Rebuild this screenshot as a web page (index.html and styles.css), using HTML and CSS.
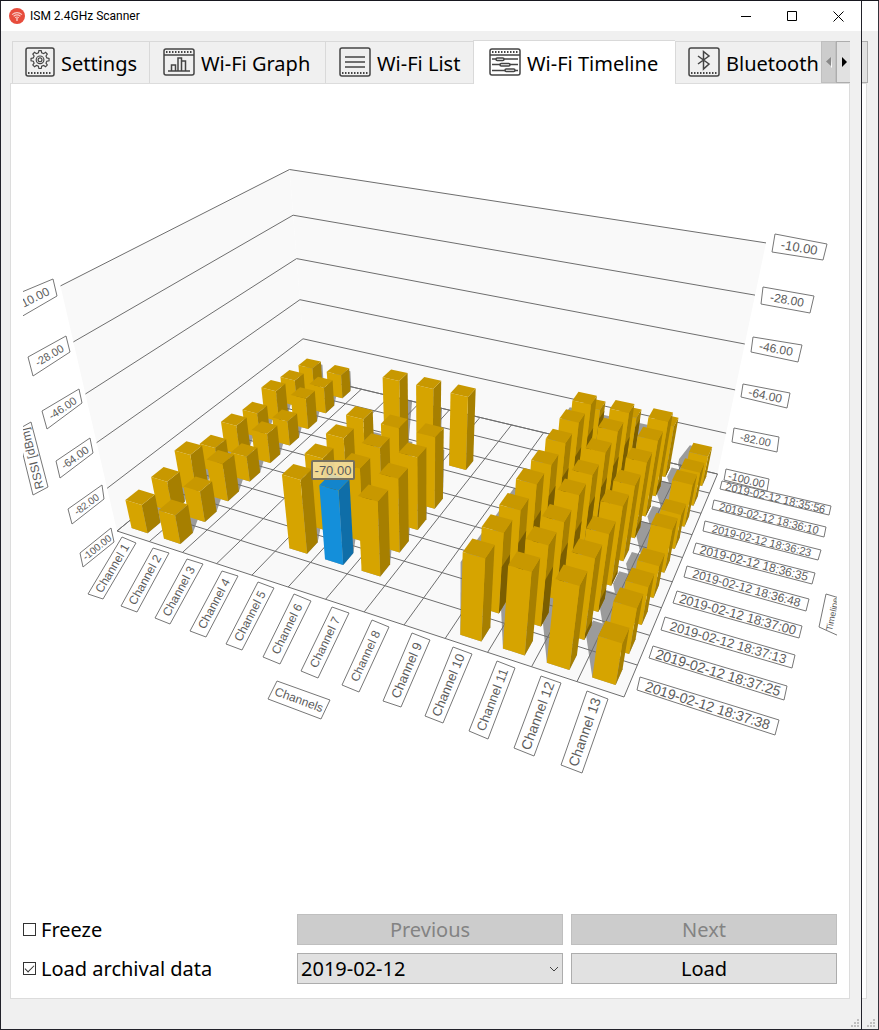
FILE: index.html
```html
<!DOCTYPE html>
<html lang="en">
<head>
<meta charset="utf-8">
<title>ISM 2.4GHz Scanner</title>
<link rel="stylesheet" href="styles.css">
</head>
<body>
<div class="desktop">
  <main class="window">
    <header class="titlebar">
      <svg class="app-icon" viewBox="0 0 16 16" aria-hidden="true"><circle cx="8" cy="8" r="8" fill="#e74c3c"/><g fill="none" stroke="#f9c9c3" stroke-width="1.1"><path d="M3 6.6q5-4 10 0M4.6 8.2q3.4-2.6 6.8 0M6.2 9.7q1.8-1.3 3.6 0"/></g><path d="M7.3 10h1.4v3H7.3z" fill="#f9c9c3"/></svg>
      <h1 class="title">ISM 2.4GHz Scanner</h1>
      <button class="caption" aria-label="Minimize"><svg viewBox="0 0 11 11"><path d="M0 5.5h10"/></svg></button>
      <button class="caption" aria-label="Maximize"><svg viewBox="0 0 11 11"><path d="M.5.5h9v9h-9z"/></svg></button>
      <button class="caption" aria-label="Close"><svg viewBox="0 0 11 11"><path d="M.5.5l10 10M10.5.5l-10 10"/></svg></button>
    </header>
    <div class="body">
      <nav class="tabs" role="tablist">
        <button class="tab settings" role="tab"><svg class="icon icon-small" viewBox="0 0 30 30"><rect x="1" y="1" width="28" height="28" rx="2"/><g transform="translate(3.5 2.8) scale(.77)"><circle cx="15" cy="13" r="2.5"/><circle cx="15" cy="13" r="5"/><path d="M13.5 1h3l.6 2.900 2.600 1.100 2.500-1.700 2.200 2.200-1.700 2.500 1.100 2.500 2.900.6v3.100l-2.900.6-1.100 2.500 1.700 2.500-2.200 2.200-2.500-1.700-2.600 1.100-.6 2.900h-3l-.6-2.900-2.600-1.100-2.500 1.700-2.200-2.200 1.700-2.500-1.100-2.500-2.900-.6v-3.100l2.900-.6 1.100-2.500-1.700-2.500 2.200-2.200 2.500 1.700 2.600-1.100z"/></g><path class="dots" d="M3 26h24"/></svg>Settings</button>
        <button class="tab graph" role="tab"><svg class="icon" viewBox="0 0 32 30"><rect x="1" y="2" width="30" height="26" rx="2"/><path d="M1 8h30M5 24h22M8.500 24v-6h4v6M15 24V11h3.500v13M18.500 14h4v10"/><path class="dots" d="M3 5h26"/></svg>Wi-Fi Graph</button>
        <button class="tab list" role="tab"><svg class="icon" viewBox="0 0 32 30"><rect x="1" y="1" width="30" height="28" rx="2"/><path d="M6 10h20M6 15h20M6 20h20"/><path class="dots" d="M3 26h26"/></svg>Wi-Fi List</button>
        <button class="tab timeline selected" role="tab" aria-selected="true"><svg class="icon" viewBox="0 0 32 30"><rect x="1" y="2" width="30" height="26" rx="2"/><path d="M1 8h30M3 12h4M15 12h14M3 17.500h8M21 17.500h8M3 23.500h13M26 23.500h3"/><rect x="7" y="11" width="8" height="2.500" rx="1.200"/><rect x="11" y="16.500" width="10" height="2.500" rx="1.200"/><rect x="16" y="22" width="10" height="2.500" rx="1.200"/><path class="dots" d="M3 5h26"/></svg>Wi-Fi Timeline</button>
        <button class="tab last" role="tab"><svg class="icon" viewBox="0 0 32 30"><rect x="1" y="1" width="30" height="28" rx="2"/><path d="M10 9l11 8-5.500 5V4.500L21 9l-11 8"/><path class="dots" d="M3 26h26"/></svg>Bluetooth</button>
        <div class="scrollers">
          <button class="scroll" disabled aria-label="Scroll tabs left"><svg viewBox="0 0 8 12"><path d="M7 1v11l-1-1z" fill="#fff"/><path d="M6 1v9L1 5.500z" fill="#888"/></svg></button>
          <button class="scroll" aria-label="Scroll tabs right"><svg viewBox="0 0 8 12"><path d="M2 1v10l5-5z"/></svg></button>
        </div>
      </nav>
      <section class="panel">
        <svg class="chart" id="chart" viewBox="23 96 814 810" role="img" aria-label="RSSI by channel over time"></svg>
        <form class="controls">
          <label class="check"><input type="checkbox"><span>Freeze</span></label>
          <button class="button" type="button" disabled>Previous</button>
          <button class="button" type="button" disabled>Next</button>
          <label class="check"><input type="checkbox" checked><span>Load archival data</span></label>
          <div class="combo"><select aria-label="Date"><option>2019-02-12</option></select><svg viewBox="0 0 10 6"><path d="M1 1l4 4 4-4"/></svg></div>
          <button class="button" type="button">Load</button>
        </form>
      </section>
      <footer class="status"><svg class="grip" viewBox="0 0 8 8"><path d="M6 0h2v2H6zM3 3h2v2H3zM6 3h2v2H6zM0 6h2v2H0zM3 6h2v2H3zM6 6h2v2H6z"/></svg></footer>
    </div>
  </main>
  <aside class="behind" aria-hidden="true">
    <div class="behind-title"></div>
    <div class="behind-scroll"></div>
    <div class="behind-panel"></div>
    <div class="behind-status"><svg class="grip" viewBox="0 0 8 8"><path d="M6 0h2v2H6zM3 3h2v2H3zM6 3h2v2H6zM0 6h2v2H0zM3 6h2v2H3zM6 6h2v2H6z"/></svg></div>
  </aside>
</div>
<script src="chart.js"></script>
</body>
</html>
```
FILE: styles.css
```css
* { box-sizing: border-box; }
body { margin: 0; background: #17171f; color: #000; font-family: "Noto Sans", "Open Sans", sans-serif; font-size: 20px; line-height: 28px; }
button, select, input { font: inherit; color: inherit; margin: 0; }
.desktop { display: flex; height: 100vh; min-height: 600px; padding-top: 1px; }
.window { flex: 1; min-width: 0; display: flex; flex-direction: column; border: 1px solid #22222a; border-top: 0; background: #f0f0f0; }
.titlebar { display: flex; align-items: center; height: 30px; padding-left: 8px; background: #fff; }
.app-icon { width: 16px; height: 16px; margin-right: 5px; }
.title { flex: 1; margin: 0; font-size: 12px; line-height: 16px; font-weight: 400; font-family: Roboto, "Noto Sans", sans-serif; }
.caption { width: 46px; height: 30px; padding: 0; border: 0; background: none; display: grid; place-items: center; }
.caption svg { width: 11px; height: 11px; fill: none; stroke: #000; }
.body { flex: 1; min-height: 0; display: flex; flex-direction: column; padding: 9px 11px 0 9px; }
.tabs { position: relative; z-index: 1; display: flex; align-items: flex-end; height: 44px; padding-left: 2px; overflow: hidden; flex: none; }
.tab { display: flex; align-items: center; gap: 6px; height: 42px; margin-bottom: 1px; padding: 3px 0 0 13px; border: 1px solid #d9d9d9; border-right: 0; border-bottom: 0; background: #f0f0f0; white-space: nowrap; flex: none; }
.tab.settings { width: 137px; padding-left: 12px; }
.tab.graph { width: 176px; }
.tab.list { width: 148px; }
.tab.timeline { width: 202px; }
.tab.selected { height: 44px; margin-bottom: 0; padding-left: 15px; background: #fff; }
.tab.last { flex: 1 0 auto; padding-left: 12px; border-left: 1px solid #d9d9d9; }
.icon { width: 32px; height: 30px; fill: none; stroke: #444; stroke-width: 1.500; margin-bottom: 5px; }
.icon-small { width: 30px; }
.icon .dots { stroke-dasharray: 1.500 1.500; stroke-width: 2; }
.scrollers { position: absolute; top: 1px; right: -1px; display: flex; }
.scroll { width: 15px; height: 42px; padding: 0; border: 1px solid #adadad; background: #e1e1e1; display: grid; place-items: center; }
.scroll:disabled { background: #ccc; border-color: #bfbfbf; }
.scroll svg { width: 8px; height: 12px; }
.panel { flex: 1; min-height: 0; display: flex; flex-direction: column; gap: 8px; padding: 12px 12px 14px; margin-top: -1px; border: 1px solid #dcdcdc; background: #fff; }
.chart { flex: 1; min-height: 0; width: 100%; font-family: "Liberation Sans", Arial, sans-serif; }
.controls { display: grid; grid-template-columns: repeat(3, 1fr); gap: 8px; }
.check { display: flex; align-items: center; gap: 5px; }
.check input { appearance: none; width: 13px; height: 13px; border: 1px solid #333; background: #fff; display: grid; place-items: center; }
.check input:checked::before { content: ""; width: 8px; height: 4px; border: solid #333; border-width: 0 0 1px 1px; transform: rotate(-45deg); margin-bottom: 3px; }
.button { height: 31px; padding: 0; border: 1px solid #adadad; background: #e1e1e1; line-height: 28px; }
.button:disabled { color: #838383; background: #ccc; border-color: #bfbfbf; }
.combo { position: relative; height: 31px; }
.combo select { width: 100%; height: 31px; padding: 0 3px; border: 1px solid #adadad; border-radius: 0; background: #e1e1e1; appearance: none; line-height: 28px; }
.combo svg { position: absolute; right: 4px; top: 13px; width: 10px; height: 6px; fill: none; stroke: #444; pointer-events: none; }
.status { height: 30px; flex: none; display: flex; justify-content: flex-end; align-items: flex-end; margin-right: -9px; padding-bottom: 2px; }
.grip { width: 8px; height: 8px; fill: #bfbfbf; }
.behind { width: 17px; display: flex; flex-direction: column; border-right: 1px solid #33333b; border-bottom: 1px solid #33333b; background: #f0f0f0; }
.behind-title { height: 30px; background: #fff; }
.behind-scroll { width: 6px; height: 42px; margin-top: 10px; border: 1px solid #adadad; border-left: 0; background: #e1e1e1; }
.behind-panel { flex: 1; width: 5px; border: 1px solid #dcdcdc; border-left: 0; background: #fff; }
.behind-status { height: 30px; display: flex; align-items: flex-end; justify-content: flex-end; padding: 0 3px 2px 0; }

.wall { fill: #f9f9f9; }
.line { fill: none; stroke: #6e6e6e; }
.shadow { fill: #9b9b9b; }
.tag { fill: #fff; stroke: #777; stroke-linejoin: round; }
.tag-text { fill: #5c5c5c; text-anchor: middle; dominant-baseline: central; }
.bar-front { fill: #d6a400; }
.bar-side { fill: #a67f00; }
.bar-top { fill: #c89800; }
.bar-shade { fill: #7b5e00; }
.picked .bar-front { fill: #148fda; }
.picked .bar-side { fill: #0f6ea8; }
.picked .bar-top { fill: #1385cc; }
.tip { fill: #f5e0a6; fill-opacity: 0.88; stroke: #77715f; stroke-width: 2; }
```
FILE: chart.js
```js
const NS = 'http://www.w3.org/2000/svg';
const svg = document.getElementById('chart');
const CHANNELS = 13, ROWS = 9;

function add(parent, name, attrs, text) {
  const el = document.createElementNS(NS, name);
  for (const k in attrs) el.setAttribute(k, attrs[k]);
  if (text) el.textContent = text;
  parent.appendChild(el);
  return el;
}

// Camera: u runs along the channels, v along time, h is the share of full height.
function project(u, v, h) {
  const w = 1 - 0.18452 * u + 0.274 * v - 0.155 * h;
  return [(117 + 391.86 * u + 272.84 * v - 65.9 * h) / w,
          (531 + 37.39 * u - 51.98 * v - 289.4 * h) / w];
}
const pts = list => list.map(p => p[0].toFixed(1) + ',' + p[1].toFixed(1)).join(' ');
const face = (parent, cls, list) => add(parent, 'polygon', { class: cls, points: pts(list.map(p => project(...p))) });
const line = list => add(svg, 'polyline', { class: 'line', points: pts(list.map(p => project(...p))) });

// Walls and floor
face(svg, 'wall', [[0, 0, 1], [0, 1, 1], [0, 1, 0], [0, 0, 0]]);
face(svg, 'wall', [[0, 1, 1], [1, 1, 1], [1, 1, 0], [0, 1, 0]]);
face(svg, 'wall', [[0, 0, 0], [0, 1, 0], [1, 1, 0], [1, 0, 0]]);

// RSSI per channel, nearest row first; null where nothing was heard
const low = [-88, -87, -84, -89, -87, -89, -86, -88, -89];
const mid = [null, -70, -70, -70, -70, null, -68.5, null, null];
const high = [-68, -68.5, -69.5, -68.5, -69.5, -69, -68.5, -68.5, -78];
const data = {
  1: low, 2: low, 5: mid, 6: mid, 7: mid, 10: high, 11: high, 12: high,
  13: [-83.7, -82, -84.8, -87, -82.4, -85.7, -82.3, -85.7, -87]
};
const height = (c, r) => data[c] && data[c][r] != null ? (data[c][r] + 100) / 90 : 0;

function hull(points) {
  const p = points.slice().sort((a, b) => a[0] - b[0] || a[1] - b[1]);
  const cross = (o, a, b) => (a[0] - o[0]) * (b[1] - o[1]) - (a[1] - o[1]) * (b[0] - o[0]);
  const half = list => {
    const out = [];
    for (const q of list) {
      while (out.length > 1 && cross(out[out.length - 2], out[out.length - 1], q) <= 0) out.pop();
      out.push(q);
    }
    out.pop();
    return out;
  };
  return half(p).concat(half(p.reverse()));
}

// Shadows fall back and to the left, and climb the back wall
const LU = -0.22, LV = 0.72;
for (let c = 1; c <= CHANNELS; c++) {
  for (let r = 0; r < ROWS; r++) {
    const h = height(c, r);
    if (!h) continue;
    const floor = [], wall = [];
    for (const a of [0.75, 0.25]) for (const b of [0.25, 0.75]) {
      const u = (c - a) / CHANNELS, v = (r + b) / ROWS;
      const reach = Math.min(h, (1 - v) / LV);
      floor.push(project(u, v, 0), project(u + LU * reach, v + LV * reach, 0));
      if (reach < h) wall.push(project(u + LU * reach, 1, 0), project(u + LU * reach, 1, h - reach));
    }
    add(svg, 'polygon', { class: 'shadow', points: pts(hull(floor)) });
    if (wall.length > 2) add(svg, 'polygon', { class: 'shadow', points: pts(hull(wall)) });
  }
}

for (let i = 0; i <= 5; i++) line([[0, 0, i / 5], [0, 1, i / 5], [1, 1, i / 5]]);
for (let c = 0; c <= CHANNELS; c++) line([[c / CHANNELS, 0, 0], [c / CHANNELS, 1, 0]]);
for (let r = 0; r <= ROWS; r++) line([[0, r / ROWS, 0], [1, r / ROWS, 0]]);

// Bars, far to near
for (let r = ROWS - 1; r >= 0; r--) {
  for (let c = 1; c <= CHANNELS; c++) {
    const h = height(c, r);
    if (!h) continue;
    const g = add(svg, 'g', c === 6 && r === 1 ? { class: 'picked' } : {});
    const u0 = (c - 0.75) / CHANNELS, u1 = (c - 0.25) / CHANNELS;
    const v0 = (r + 0.25) / ROWS, v1 = (r + 0.75) / ROWS;
    face(g, 'bar-side', [[u1, v0, 0], [u1, v1, 0], [u1, v1, h], [u1, v0, h]]);
    const s = Math.min(h, height(c + 1, r - 1) - 0.15);
    if (r > 0 && s > 0) face(g, 'bar-shade', [[u1, v0, 0], [u1, v1, 0], [u1, v1, s], [u1, v0, s]]);
    face(g, 'bar-front', [[u0, v0, 0], [u1, v0, 0], [u1, v0, h], [u0, v0, h]]);
    face(g, 'bar-top', [[u0, v0, h], [u1, v0, h], [u1, v1, h], [u0, v1, h]]);
  }
}

// A label: box corners from top left clockwise; "up" text reads from the bottom edge
function tag(text, size, q, up) {
  add(svg, 'polygon', { class: 'tag', points: q.join(' ') });
  const m = (i, j) => [(q[2 * i] + q[2 * j]) / 2, (q[2 * i + 1] + q[2 * j + 1]) / 2];
  const from = up ? m(2, 3) : m(0, 3), to = up ? m(0, 1) : m(1, 2);
  const angle = Math.atan2(to[1] - from[1], to[0] - from[0]) * 180 / Math.PI;
  const x = (from[0] + to[0]) / 2, y = (from[1] + to[1]) / 2;
  add(svg, 'text', { class: 'tag-text', 'font-size': size, transform: `translate(${x} ${y}) rotate(${angle.toFixed(1)})` }, text);
}

[
  ['18:35:56', 11, [722, 481, 831, 506, 829, 515, 720, 489]],
  ['18:36:10', 11, [714, 500, 826, 527, 824, 537, 712, 509]],
  ['18:36:23', 11, [705, 521, 821, 550, 818, 560, 703, 531]],
  ['18:36:35', 12, [696, 543, 815, 573, 812, 584, 693, 553]],
  ['18:36:48', 12, [687, 566, 809, 599, 806, 611, 684, 577]],
  ['18:37:00', 13, [677, 591, 802, 626, 799, 638, 673, 603]],
  ['18:37:13', 13, [665, 617, 795, 655, 792, 668, 661, 630]],
  ['18:37:25', 14, [653, 646, 787, 686, 784, 700, 649, 658]],
  ['18:37:38', 14, [640, 677, 779, 720, 775, 735, 637, 690]]
].forEach(([t, s, q]) => tag('2019-02-12 ' + t, s, q));

[
  [122, 537, 136, 543, 103, 599, 88, 594], [153, 548, 169, 553, 137, 612, 121, 606],
  [187, 559, 203, 564, 170, 624, 155, 618], [222, 571, 238, 576, 206, 637, 190, 631],
  [258, 582, 274, 588, 242, 650, 226, 644], [294, 594, 311, 601, 280, 664, 263, 657],
  [332, 607, 349, 613, 318, 678, 301, 671], [372, 620, 389, 627, 359, 692, 342, 685],
  [412, 633, 430, 640, 401, 707, 383, 701], [453, 647, 472, 654, 443, 723, 425, 716],
  [497, 661, 515, 668, 488, 739, 469, 731], [541, 676, 561, 683, 534, 756, 514, 748],
  [587, 691, 608, 699, 582, 773, 561, 765]
].forEach((q, i) => tag('Channel ' + (i + 1), i < 8 ? 12 : i < 11 ? 13 : 14, q, true));

[
  ['-10.00', 12, [10, 297, 53, 279, 57, 296, 14, 321], 13, [775, 234, 827, 244, 823, 260, 772, 252]],
  ['-28.00', 11, [28, 357, 66, 336, 70, 352, 33, 376], 12, [763, 287, 814, 296, 810, 313, 761, 304]],
  ['-46.00', 11, [42, 411, 79, 389, 82, 403, 47, 429], 12, [753, 337, 802, 345, 798, 362, 751, 352]],
  ['-64.00', 11, [56, 461, 90, 438, 93, 453, 60, 478], 12, [743, 384, 790, 393, 787, 408, 741, 397]],
  ['-82.00', 10, [68, 509, 102, 485, 104, 499, 72, 524], 11, [734, 428, 779, 437, 777, 452, 732, 442]],
  ['-100.00', 10, [80, 553, 111, 528, 114, 542, 83, 567], 11, [726, 469, 769, 479, 767, 491, 724, 480]]
].forEach(([t, ls, l, rs, r]) => { tag(t, ls, l); tag(t, rs, r); });

tag('Channels', 12, [277, 681, 330, 700, 321, 719, 268, 699]);
tag('RSSI [dBm]', 12, [17, 430, 31, 422, 48, 487, 33, 495], true);
tag('Timeline', 9, [826, 594, 846, 600, 839, 636, 819, 627], true);

add(svg, 'rect', { class: 'tip', x: 312, y: 461, width: 42, height: 18, rx: 1 });
add(svg, 'text', { class: 'tag-text', 'font-size': 13, x: 333, y: 470 }, '-70.00');
```
